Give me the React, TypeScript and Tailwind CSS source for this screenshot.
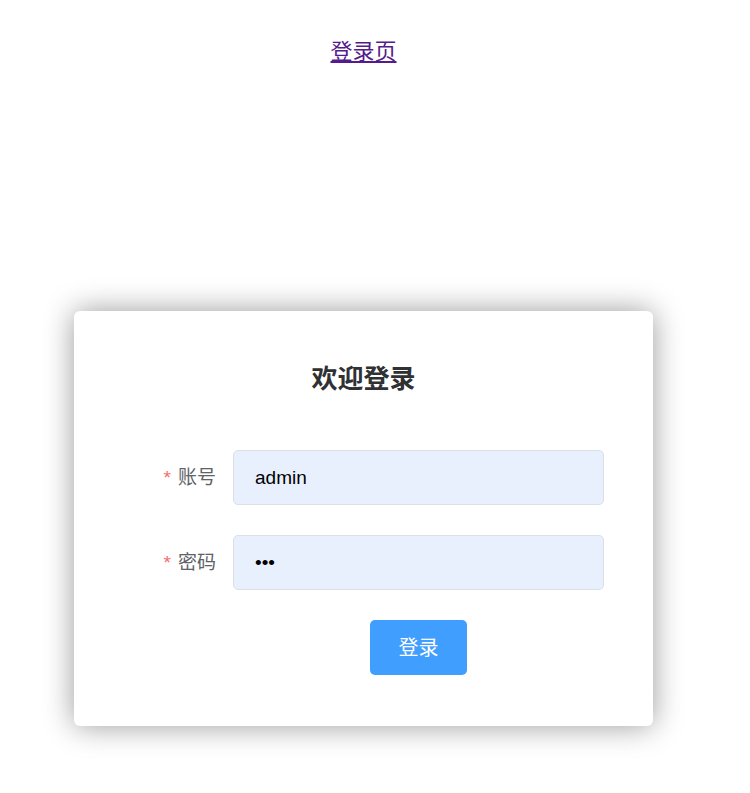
import { useState } from "react";

const font = { fontFamily: '"Liberation Sans", "Noto Sans CJK SC", sans-serif' };

function Field({ label, type, value, onChange }: { label: string; type: string; value: string; onChange: (v: string) => void }) {
  return (
    <div className="flex items-center">
      <label className="w-[159px] pr-[17px] pt-[1px] text-right text-[19px] text-[#606266]">
        <span className="mr-[7px] text-[#f56c6c]">*</span>
        {label}
      </label>
      <input
        type={type}
        value={value}
        onChange={(e) => onChange(e.target.value)}
        className="h-[55px] w-[371px] rounded-[5px] border border-[#dcdfe6] bg-[#e8f0fe] px-[21px] text-[19px] text-black outline-none"
      />
    </div>
  );
}

export default function App() {
  const [user, setUser] = useState("admin");
  const [pwd, setPwd] = useState("123");

  return (
    <div className="flex w-[727px] flex-col items-center bg-white pb-[67px]" style={font}>
      <a href="#" className="mt-[36px] text-[22px] leading-[32px] text-[#551a8b] underline">
        登录页
      </a>

      <div className="mt-[243px] h-[415px] w-[579px] rounded-[6px] bg-white pt-[50px] shadow-[0_0_30px_rgba(0,0,0,0.4)]">
        <h2 className="text-center text-[26px] font-bold leading-[36px] text-[#303133]">欢迎登录</h2>

        <form className="mt-[53px] flex flex-col gap-[30px]" onSubmit={(e) => e.preventDefault()}>
          <Field label="账号" type="text" value={user} onChange={setUser} />
          <Field label="密码" type="password" value={pwd} onChange={setPwd} />
          <div className="pl-[296px]">
            <button type="submit" className="h-[55px] w-[97px] rounded-[5px] bg-[#409eff] text-[20px] text-white">
              登录
            </button>
          </div>
        </form>
      </div>
    </div>
  );
}
